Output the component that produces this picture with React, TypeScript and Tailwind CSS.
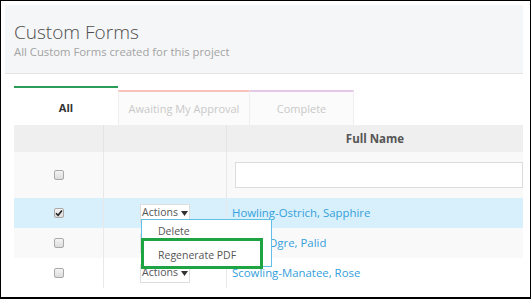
import React from 'react';

const font = { fontFamily: '"Open Sans", "Liberation Sans", sans-serif' };

function Checkbox({ checked }: { checked?: boolean }) {
  return (
    <span className="relative inline-flex h-[10px] w-[10px] items-center justify-center rounded-[2px] border border-[#a9a9a9] bg-gradient-to-b from-[#f4f4f4] to-[#dcdcdc]">
      {checked && (
        <svg width="8" height="8" viewBox="0 0 8 8" className="absolute">
          <path d="M1 4.2 L3.1 6.3 L7 1.6" fill="none" stroke="#222" strokeWidth="1.6" />
        </svg>
      )}
    </span>
  );
}

function ActionsButton() {
  return (
    <button
      type="button"
      className="flex h-[19px] w-[50px] items-center justify-center gap-[3px] border border-[#dedede] bg-white text-[10.5px] text-[#555]"
    >
      <span>Actions</span>
      <svg width="7" height="5" viewBox="0 0 7 5">
        <path d="M0 0 L7 0 L3.5 5 Z" fill="#333" />
      </svg>
    </button>
  );
}

interface Row {
  name: string;
  checked?: boolean;
  bg: string;
}

const rows: Row[] = [
  { name: 'Howling-Ostrich, Sapphire', checked: true, bg: 'bg-[#d8f0fb]' },
  { name: 'Snarly-Ogre, Palid', bg: 'bg-[#f9f9f9]' },
  { name: 'Scowling-Manatee, Rose', bg: 'bg-white' },
];

export default function App() {
  return (
    <div
      className="h-[299px] w-[531px] overflow-hidden border border-b-2 border-black bg-white"
      style={font}
    >
      {/* Page header */}
      <div className="ml-[4px] mr-[7px] mt-[4px] h-[69px] border-b border-[#e2e3e4] bg-[#f5f6f7] pl-[9px] pt-[15px]">
        <h1 className="text-[19px] font-light leading-[24px] text-[#4d4d4d]">Custom Forms</h1>
        <p className="mt-[1px] text-[11.3px] leading-[14px] text-[#a3a3a3]">
          All Custom Forms created for this project
        </p>
      </div>

      <div className="ml-[13px] mr-[7px]">
        {/* Tabs */}
        <div className="mt-[12px] flex h-[39px] items-end">
          <div className="flex h-[39px] w-[104px] items-center justify-center border-t-2 border-[#2a9e58] bg-white pt-[3px] text-[11px] font-bold text-[#333]">
            All
          </div>
          <div className="flex h-[35px] w-[132px] items-center justify-center border-x border-t-2 border-x-[#eeeeee] border-t-[#f7c4bb] bg-[#fbfbfb] pt-[1px] text-[11px] text-[#c9c9c9]">
            Awaiting My Approval
          </div>
          <div className="flex h-[35px] w-[104px] items-center justify-center border-r border-t-2 border-r-[#eeeeee] border-t-[#e4c8e8] bg-[#fbfbfb] pt-[1px] text-[11px] text-[#c9c9c9]">
            Complete
          </div>
        </div>

        {/* Table */}
        <div className="relative">
          <div className="grid h-[27px] grid-cols-[90px_123px_1fr] bg-[#efefef]">
            <div className="border-r border-[#e4e4e4]" />
            <div className="border-r border-[#e4e4e4]" />
            <div className="flex items-center justify-center text-[11.5px] font-bold text-[#555]">
              Full Name
            </div>
          </div>

          <div className="grid h-[46px] grid-cols-[90px_123px_1fr] bg-[#f9f9f9]">
            <div className="flex items-center justify-center border-r border-[#e8e8e8]">
              <Checkbox />
            </div>
            <div className="border-r border-[#e8e8e8]" />
            <div className="pl-[8px] pt-[10px]">
              <input
                type="text"
                className="h-[26px] w-full border border-[#dcdcdc] bg-white"
                aria-label="Filter by full name"
              />
            </div>
          </div>

          {rows.map((row) => (
            <div key={row.name} className={`grid h-[30px] grid-cols-[90px_123px_1fr] ${row.bg}`}>
              <div className="flex items-center justify-center border-r border-[#e8e8e8]">
                <Checkbox checked={row.checked} />
              </div>
              <div className="flex items-center justify-center border-r border-[#e8e8e8]">
                <ActionsButton />
              </div>
              <div className="flex items-center pl-[5px] text-[11.4px] text-[#35a0dc]">{row.name}</div>
            </div>
          ))}

          {/* Open actions menu */}
          <div className="absolute left-[127px] top-[94px] h-[48px] w-[131px] border border-[#62bfe6] bg-white text-[10.5px] text-[#555]">
            <div className="pl-[16px] pt-[3px] leading-[16px]">Delete</div>
            <div className="pl-[16px] pt-[8px] leading-[16px]">Regenerate PDF</div>
          </div>
          {/* Highlight box */}
          <div className="absolute left-[127px] top-[113px] h-[31px] w-[122px] border-[3px] border-[#1ea443]" />
        </div>
      </div>
    </div>
  );
}
